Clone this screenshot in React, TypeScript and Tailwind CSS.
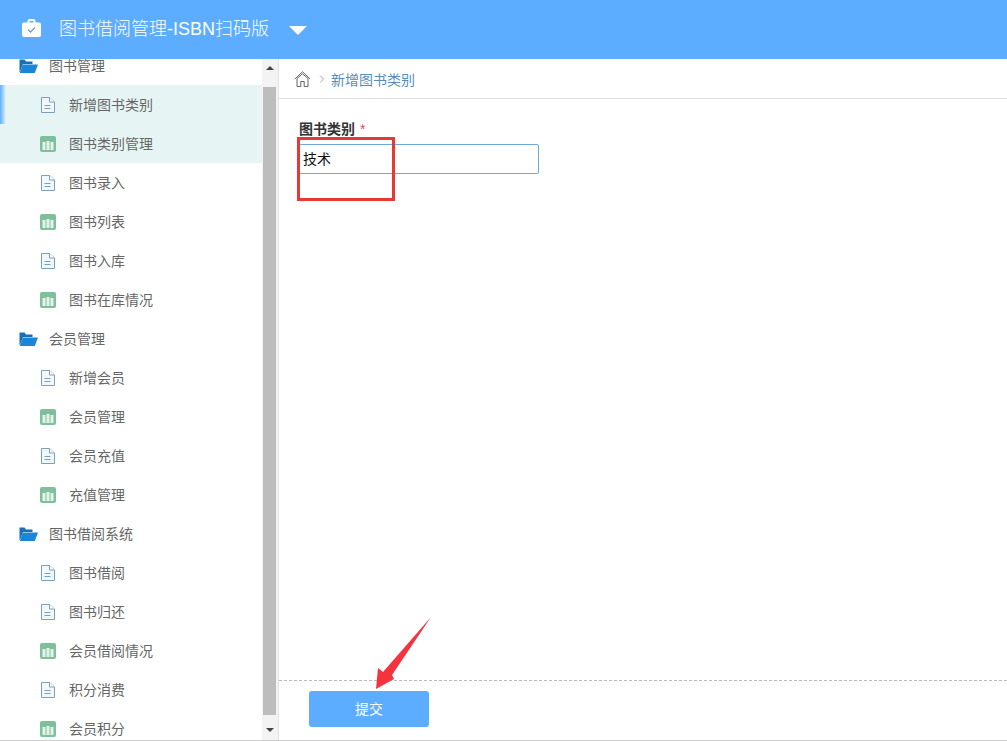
import { ChevronRight } from 'lucide-react';

type Row = { label: string; kind: 'folder' | 'doc' | 'chart'; active?: boolean; marker?: boolean };

const rows: Row[] = [
    { label: '图书管理', kind: 'folder' },
    { label: '新增图书类别', kind: 'doc', active: true, marker: true },
    { label: '图书类别管理', kind: 'chart', active: true },
    { label: '图书录入', kind: 'doc' },
    { label: '图书列表', kind: 'chart' },
    { label: '图书入库', kind: 'doc' },
    { label: '图书在库情况', kind: 'chart' },
    { label: '会员管理', kind: 'folder' },
    { label: '新增会员', kind: 'doc' },
    { label: '会员管理', kind: 'chart' },
    { label: '会员充值', kind: 'doc' },
    { label: '充值管理', kind: 'chart' },
    { label: '图书借阅系统', kind: 'folder' },
    { label: '图书借阅', kind: 'doc' },
    { label: '图书归还', kind: 'doc' },
    { label: '会员借阅情况', kind: 'chart' },
    { label: '积分消费', kind: 'doc' },
    { label: '会员积分', kind: 'chart' },
];

function FolderIcon() {
    return (
        <svg width="19" height="14" viewBox="0 0 19 14" className="shrink-0">
            <path d="M0.5 13V0.5h5l1.5 2h6.5V5H4L1 13z" fill="#1a6fb5" />
            <path d="M3.8 5.6H19L15.8 14H0.8z" fill="#1c86d6" />
        </svg>
    );
}

function DocIcon() {
    return (
        <svg width="15" height="16" viewBox="0 0 15 16" className="shrink-0" fill="#f0f8fc" stroke="#7f9fb8" strokeWidth="1">
            <path d="M1.5 .5h8L14.5 5v10.5h-13z" />
            <path d="M9.5 .5V5h5" fill="#fff" />
            <path d="M4.5 8.5h6M4.5 11.5h6" fill="none" />
        </svg>
    );
}

function ChartIcon() {
    return (
        <svg width="16" height="16" viewBox="0 0 16 16" className="shrink-0">
            <rect width="16" height="16" rx="2" fill="#7fbf9c" />
            <path d="M2.5 6h3v8h-3zM6.5 5h3v9h-3zM10.500 6h3v8h-3z" fill="#e4f3ea" />
        </svg>
    );
}

function HomeIcon() {
    return (
        <svg width="17" height="16" viewBox="0 0 17 16" fill="none" stroke="#666" strokeWidth="1" className="shrink-0">
            <path d="M.8 8L8.5 .8 16.2 8" />
            <path d="M3 7.500L8.5 2.800 14 7.500" />
            <path d="M3 7.500v8h3.800v-5h3.400v5H14v-8" />
        </svg>
    );
}

function SideRow({ row }: { row: Row }) {
    return (
        <div className={`relative flex h-[39px] shrink-0 items-center ${row.active ? 'bg-[#e6f5f3]' : 'bg-white'} ${row.kind === 'folder' ? 'pl-[19px]' : 'pl-[40px]'}`}>
            {row.marker && <div className="absolute left-0 top-0 h-full w-[6px] bg-gradient-to-r from-[#5cadff] to-transparent" />}
            {row.kind === 'folder' && <FolderIcon />}
            {row.kind === 'doc' && <DocIcon />}
            {row.kind === 'chart' && <ChartIcon />}
            <span className={`mt-[2px] text-[14px] text-[#666] ${row.kind === 'folder' ? 'ml-[11px]' : row.kind === 'doc' ? 'ml-[14px]' : 'ml-[13px]'}`}>{row.label}</span>
        </div>
    );
}

function Scrollbar() {
    return (
        <div className="flex w-[16px] shrink-0 flex-col items-start bg-[#f3f3f3]">
            <div className="flex h-[28px] w-full shrink-0 items-start justify-center pt-[7px]">
                <div className="h-0 w-0 border-x-[4px] border-b-[4px] border-x-transparent border-b-[#444]" />
            </div>
            <div className="ml-px w-[13px] flex-1 bg-[#bdbdbd]" />
            <div className="flex h-[25px] w-full shrink-0 items-end justify-center pb-[8px]">
                <div className="h-0 w-0 border-x-[4px] border-t-[4px] border-x-transparent border-t-[#444]" />
            </div>
        </div>
    );
}

export default function App() {
    return (
        <div className="relative flex h-[741px] w-full flex-col overflow-hidden bg-white font-['Liberation_Sans','Noto_Sans_CJK_SC',sans-serif]">
            {/* Header */}
            <header className="flex h-[59px] shrink-0 items-center bg-[#5cadff] pl-[22px] text-white">
                <svg width="19" height="18" viewBox="0 0 19 18" className="mb-[3px] shrink-0">
                    <path d="M5.500 3.500V2a2 2 0 0 1 2-2h4a2 2 0 0 1 2 2v1.500H17a2 2 0 0 1 2 2V16a2 2 0 0 1-2 2H2a2 2 0 0 1-2-2V5.500a2 2 0 0 1 2-2zM7.500 2v1.500h4V2z" fill="#fff" fillRule="evenodd" />
                    <path d="M6 10.500l2.500 2.500 4.500-4.500" fill="none" stroke="#7f9fb8" strokeWidth="1.300" />
                </svg>
                <span className="ml-[18px] text-[18px] font-light">图书借阅管理-ISBN扫码版</span>
                <div className="ml-[20px] mt-[1px] h-0 w-0 border-x-[9px] border-t-[9px] border-x-transparent border-t-white" />
            </header>

            <div className="flex min-h-0 flex-1 border-b border-[#ccc]">
                {/* Sidebar */}
                <aside className="flex w-[262px] shrink-0 flex-col overflow-hidden">
                    <div className="-mt-[13px] flex flex-col">
                        {rows.map((row, i) => (
                            <SideRow key={i} row={row} />
                        ))}
                    </div>
                </aside>
                <Scrollbar />

                {/* Main */}
                <main className="flex min-w-0 flex-1 flex-col border-l border-[#e3e3e3]">
                    <div className="flex h-[40px] shrink-0 items-center border-b border-[#e0e0e0] pl-[15px]">
                        <HomeIcon />
                        <ChevronRight size={12} strokeWidth={1.2} className="ml-[5px] text-[#666]" />
                        <span className="ml-[3px] mt-[3px] text-[14px] text-[#5a8db8]">新增图书类别</span>
                    </div>
                    <div className="flex-1 pl-[20px] pt-[22px]">
                        <label className="flex h-[17px] items-center text-[14px] font-bold text-[#333]">
                            图书类别
                            <span className="ml-[5px] font-normal text-[#d9534f]">*</span>
                        </label>
                        <input
                            readOnly
                            value="技术"
                            className="mt-[6px] block h-[30px] w-[240px] rounded-[2px] border border-[#6fa8dc] px-[3px] pb-[2px] text-[14px] text-[#111] outline-none"
                        />
                    </div>
                    <div className="h-[60px] shrink-0 border-t border-dashed border-[#bbb] pl-[30px] pt-[10px]">
                        <button className="h-[36px] w-[120px] rounded-[3px] bg-[#5cadff] text-[14px] text-white">提交</button>
                    </div>
                </main>
            </div>

            {/* Annotations */}
            <div className="absolute left-[297px] top-[137px] h-[64px] w-[98px] border-[3px] border-[#e53935]" />
            <svg className="absolute left-[370px] top-[612px]" width="66" height="82" viewBox="0 0 66 82">
                <path d="M61 5L22 63l2 4L6 77l2-21 5 4z" fill="#f5333f" />
            </svg>
        </div>
    );
}
